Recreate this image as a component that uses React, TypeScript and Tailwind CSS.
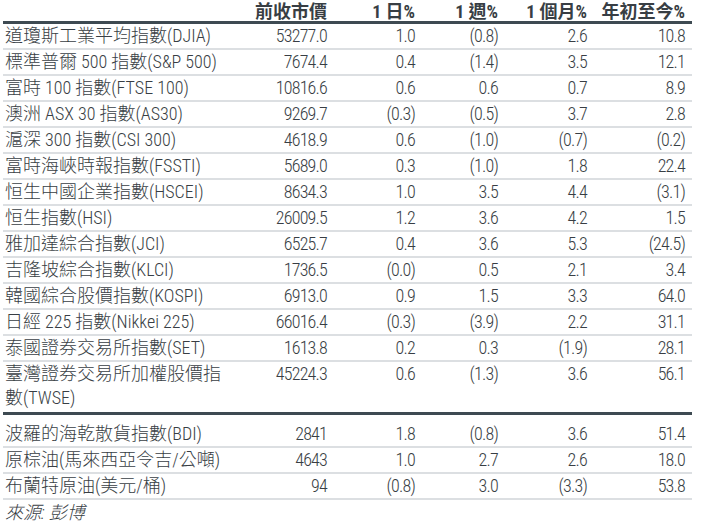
import React from "react";

interface Row {
  name: string;
  close: string;
  d1: string;
  w1: string;
  m1: string;
  ytd: string;
}

const indices: Row[] = [
  { name: "道瓊斯工業平均指數(DJIA)", close: "53277.0", d1: "1.0", w1: "(0.8)", m1: "2.6", ytd: "10.8" },
  { name: "標準普爾 500 指數(S&P 500)", close: "7674.4", d1: "0.4", w1: "(1.4)", m1: "3.5", ytd: "12.1" },
  { name: "富時 100 指數(FTSE 100)", close: "10816.6", d1: "0.6", w1: "0.6", m1: "0.7", ytd: "8.9" },
  { name: "澳洲 ASX 30 指數(AS30)", close: "9269.7", d1: "(0.3)", w1: "(0.5)", m1: "3.7", ytd: "2.8" },
  { name: "滬深 300 指數(CSI 300)", close: "4618.9", d1: "0.6", w1: "(1.0)", m1: "(0.7)", ytd: "(0.2)" },
  { name: "富時海峽時報指數(FSSTI)", close: "5689.0", d1: "0.3", w1: "(1.0)", m1: "1.8", ytd: "22.4" },
  { name: "恒生中國企業指數(HSCEI)", close: "8634.3", d1: "1.0", w1: "3.5", m1: "4.4", ytd: "(3.1)" },
  { name: "恒生指數(HSI)", close: "26009.5", d1: "1.2", w1: "3.6", m1: "4.2", ytd: "1.5" },
  { name: "雅加達綜合指數(JCI)", close: "6525.7", d1: "0.4", w1: "3.6", m1: "5.3", ytd: "(24.5)" },
  { name: "吉隆坡綜合指數(KLCI)", close: "1736.5", d1: "(0.0)", w1: "0.5", m1: "2.1", ytd: "3.4" },
  { name: "韓國綜合股價指數(KOSPI)", close: "6913.0", d1: "0.9", w1: "1.5", m1: "3.3", ytd: "64.0" },
  { name: "日經 225 指數(Nikkei 225)", close: "66016.4", d1: "(0.3)", w1: "(3.9)", m1: "2.2", ytd: "31.1" },
  { name: "泰國證券交易所指數(SET)", close: "1613.8", d1: "0.2", w1: "0.3", m1: "(1.9)", ytd: "28.1" },
];

const twse: Row = {
  name: "臺灣證券交易所加權股價指數(TWSE)",
  close: "45224.3",
  d1: "0.6",
  w1: "(1.3)",
  m1: "3.6",
  ytd: "56.1",
};

const commodities: Row[] = [
  { name: "波羅的海乾散貨指數(BDI)", close: "2841", d1: "1.8", w1: "(0.8)", m1: "3.6", ytd: "51.4" },
  { name: "原棕油(馬來西亞令吉/公噸)", close: "4643", d1: "1.0", w1: "2.7", m1: "2.6", ytd: "18.0" },
  { name: "布蘭特原油(美元/桶)", close: "94", d1: "(0.8)", w1: "3.0", m1: "(3.3)", ytd: "53.8" },
];

const grid = "grid grid-cols-[237px_94px_88px_83px_89px_98px]";
const num = "text-right pr-[7px] tracking-[-0.8px]";

const Cells: React.FC<{ row: Row }> = ({ row }) => (
  <>
    <div className="pl-[2px] pr-[12px]">{row.name}</div>
    <div className={num}>{row.close}</div>
    <div className={num}>{row.d1}</div>
    <div className={num}>{row.w1}</div>
    <div className={num}>{row.m1}</div>
    <div className={num}>{row.ytd}</div>
  </>
);

export default function App() {
  return (
    <div className="w-[701px] h-[529px] bg-white text-[#383e44] text-[18px] leading-6 font-light overflow-hidden font-['Roboto_Condensed','Arial_Narrow','Noto_Sans_CJK_TC',sans-serif]">
      <div className="ml-[3px] w-[689px]">
        {/* header */}
        <div className={`${grid} h-[24px] font-bold border-b-[3px] border-[#3e4a52]`}>
          <div />
          <div className="text-right pr-[7px]">前收市價</div>
          <div className="text-right pr-[7px]">1 日%</div>
          <div className="text-right pr-[7px]">1 週%</div>
          <div className="text-right pr-[7px]">1 個月%</div>
          <div className="text-right pr-[7px]">年初至今%</div>
        </div>

        {indices.map((r) => (
          <div key={r.name} className={`${grid} border-b-2 border-[#dcdfe2]`}>
            <Cells row={r} />
          </div>
        ))}

        <div className={`${grid} pb-[2px] border-b-[3px] border-[#3e4a52]`}>
          <Cells row={twse} />
        </div>

        {commodities.map((r, i) => (
          <div
            key={r.name}
            className={`${grid} border-b-2 border-[#dcdfe2] ${i === 0 ? "pt-[7px]" : ""}`}
          >
            <Cells row={r} />
          </div>
        ))}

        <div className="pl-[2px] pt-[1px] italic">來源: 彭博</div>
      </div>
    </div>
  );
}
